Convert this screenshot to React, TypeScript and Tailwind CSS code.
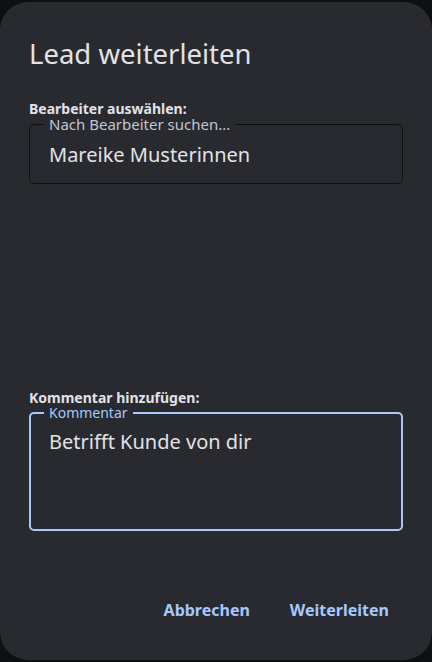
import React from "react";

const font = { fontFamily: '"Noto Sans", "Open Sans", sans-serif' };

function OutlinedField({
  label,
  value,
  focused,
  height,
}: {
  label: string;
  value: string;
  focused?: boolean;
  height: string;
}) {
  return (
    <fieldset
      className={
        "relative m-0 rounded-[5px] px-0 " +
        height +
        (focused ? " border-2 border-[#a6c8ff]" : " border border-[#0f1012]")
      }
    >
      <legend
        className={
          "px-[5px] leading-[14px] " +
          (focused ? "ml-[13px] text-[14px] text-[#a6c8ff]" : "ml-[14px] text-[15px] text-[#c3c6cf]")
        }
      >
        {label}
      </legend>
      <div
        className={
          "text-[20px] leading-[24px] text-[#e2e2e6] " +
          (focused ? "pl-[18px] pt-[10px]" : "pl-[19px] pt-[12px]")
        }
      >
        {value}
      </div>
    </fieldset>
  );
}

export default function App() {
  return (
    <div className="h-[662px] w-[432px] bg-[#0e0f11] pt-[2px]" style={font}>
      <div className="flex h-[658px] flex-col rounded-[28px] bg-[#282a2f] px-[29px]">
        <h1 className="mt-[35px] text-[27.5px] font-normal leading-[34px] text-[#e2e2e6]">
          Lead weiterleiten
        </h1>

        <div className="mt-[30px] text-[14px] font-bold leading-[16px] text-[#e2e2e6]">
          Bearbeiter auswählen:
        </div>
        <OutlinedField label="Nach Bearbeiter suchen..." value="Mareike Musterinnen" height="h-[67px]" />

        <div className="mt-[206px] text-[14px] font-bold leading-[16px] text-[#e2e2e6]">
          Kommentar hinzufügen:
        </div>
        <OutlinedField label="Kommentar" value="Betrifft Kunde von dir" focused height="h-[125px]" />

        <div className="mt-[69px] flex justify-end gap-[40px] pr-[14px]">
          <button className="text-[16px] font-bold leading-[20px] text-[#a6c8ff]">Abbrechen</button>
          <button className="text-[16px] font-bold leading-[20px] text-[#a6c8ff]">Weiterleiten</button>
        </div>
      </div>
    </div>
  );
}
